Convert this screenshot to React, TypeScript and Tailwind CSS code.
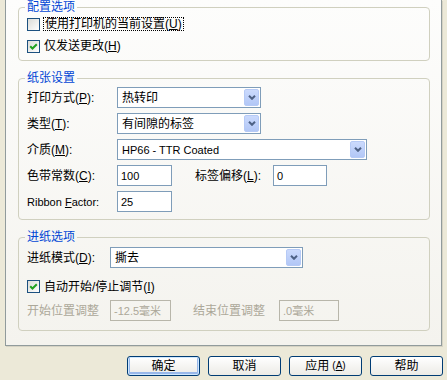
import React from 'react';

const Mn = ({ c }: { c: string }) => <span className="underline">{c}</span>;

const CheckBox = ({ checked }: { checked?: boolean }) => (
  <span className="w-[13px] h-[13px] shrink-0 border border-[#1C5180] bg-linear-to-br from-[#DCDCD7] to-white flex items-center justify-center">
    {checked && (
      <svg width="9" height="9" viewBox="0 0 9 9">
        <path d="M1.2 4.2 L3.5 6.5 L7.8 2.2" stroke="#21A121" strokeWidth="2" fill="none" />
      </svg>
    )}
  </span>
);

const Select = ({ value, width, latin }: { value: string; width: string; latin?: boolean }) => (
  <div className={`${width} h-[21px] border border-[#7F9DB9] bg-white flex items-center`}>
    <span className={`pl-[4px] flex-1 ${latin ? 'text-[11px]' : ''}`}>{value}</span>
    <span className="w-[15px] h-[17px] mr-px rounded-[2px] border border-[#B6CAF6] bg-linear-to-b from-[#CBDAFD] to-[#B2C7F6] flex items-center justify-center">
      <svg width="8" height="5" viewBox="0 0 8 5">
        <path d="M1 0.8 L4 3.8 L7 0.8" stroke="#4D6185" strokeWidth="2" fill="none" />
      </svg>
    </span>
  </div>
);

const Edit = ({ value, width, disabled }: { value: string; width: string; disabled?: boolean }) => (
  <div
    className={`${width} h-[21px] border flex items-center pl-[3px] text-[11px] ${
      disabled ? 'border-[#B8B6AA] text-[#ACA899]' : 'border-[#7F9DB9] bg-white'
    }`}
  >
    {value}
  </div>
);

const Group = ({ title, className, children }: { title: string; className?: string; children: React.ReactNode }) => (
  <fieldset className={`w-[412px] border border-[#D0D0BF] rounded-[4px] pl-[8px] ${className ?? ''}`}>
    <legend className="-ml-[2px] px-[2px] leading-[13px] text-[#0046D5]">{title}</legend>
    {children}
  </fieldset>
);

export default function App() {
  return (
    <div className="w-[447px] h-[380px] overflow-hidden bg-[#ECE9D8] flex flex-col text-[12px] text-black font-['Liberation_Sans','Noto_Sans_CJK_SC',sans-serif] leading-[14px]">
      <div className="ml-[5px] w-[437px] h-[346px] shrink-0 border-x border-b border-[#919B9C] shadow-[1px_1px_0_#D6D3C4] bg-linear-to-b from-[#FDFDFC] to-[#F4F3EE] pl-[12px] pt-[1px]">
        <Group title="配置选项" className="pt-[3px] pb-[7px]">
          <div className="flex flex-col gap-[8px]">
            <div className="h-[14px] flex items-center">
              <CheckBox />
              <span className="ml-[3px] px-px border border-dotted border-black leading-[12px]">
                使用打印机的当前设置(<Mn c="U" />)
              </span>
            </div>
            <div className="h-[14px] flex items-center">
              <CheckBox checked />
              <span className="ml-[4px]">
                仅发送更改(<Mn c="H" />)
              </span>
            </div>
          </div>
        </Group>

        <Group title="纸张设置" className="mt-[11px] pt-[2px] pb-[7px]">
          <div className="flex flex-col gap-[5px]">
            <div className="h-[21px] flex items-center">
              <span className="w-[90px]">打印方式(<Mn c="P" />):</span>
              <Select value="热转印" width="w-[144px]" />
            </div>
            <div className="h-[21px] flex items-center">
              <span className="w-[90px]">类型(<Mn c="T" />):</span>
              <Select value="有间隙的标签" width="w-[144px]" />
            </div>
            <div className="h-[21px] flex items-center">
              <span className="w-[90px]">介质(<Mn c="M" />):</span>
              <Select value="HP66 - TTR Coated" width="w-[250px]" latin />
            </div>
            <div className="h-[21px] flex items-center">
              <span className="w-[90px]">色带常数(<Mn c="C" />):</span>
              <Edit value="100" width="w-[55px]" />
              <span className="ml-[23px] w-[78px]">标签偏移(<Mn c="L" />):</span>
              <Edit value="0" width="w-[54px]" />
            </div>
            <div className="h-[21px] flex items-center">
              <span className="w-[90px] text-[11px]">
                Ribbon <Mn c="F" />actor:
              </span>
              <Edit value="25" width="w-[55px]" />
            </div>
          </div>
        </Group>

        <Group title="进纸选项" className="mt-[11px] pt-[3px] pb-[9px]">
          <div className="flex flex-col">
            <div className="h-[21px] flex items-center">
              <span className="w-[83px]">进纸模式(<Mn c="D" />):</span>
              <Select value="撕去" width="w-[193px]" />
            </div>
            <div className="h-[13px] mt-[12px] flex items-center">
              <CheckBox checked />
              <span className="ml-[4px]">
                自动开始/停止调节(<Mn c="I" />)
              </span>
            </div>
            <div className="h-[21px] mt-[7px] flex items-center text-[#ACA899]">
              <span className="w-[83px]">开始位置调整</span>
              <Edit value="-12.5毫米" width="w-[61px]" disabled />
              <span className="ml-[22px] w-[86px]">结束位置调整</span>
              <Edit value=".0毫米" width="w-[60px]" disabled />
            </div>
          </div>
        </Group>
      </div>

      <div className="mt-[10px] h-[20px] pr-[4px] flex justify-end gap-[8px]">
        {['确定', '取消', '应用', '帮助'].map((label, i) => (
          <button
            key={label}
            className={`w-[73px] h-[20px] rounded-[3px] border border-[#003C74] bg-linear-to-b from-white to-[#ECEBE6] flex items-center justify-center ${
              i === 0 ? 'shadow-[inset_0_0_0_1px_#CEE7FF,inset_0_-1px_0_2px_#98B8EA]' : ''
            }`}
          >
            {label}
            {i === 2 && (
              <span className="ml-[3px] text-[10px]">
                (<Mn c="A" />)
              </span>
            )}
          </button>
        ))}
      </div>
    </div>
  );
}
